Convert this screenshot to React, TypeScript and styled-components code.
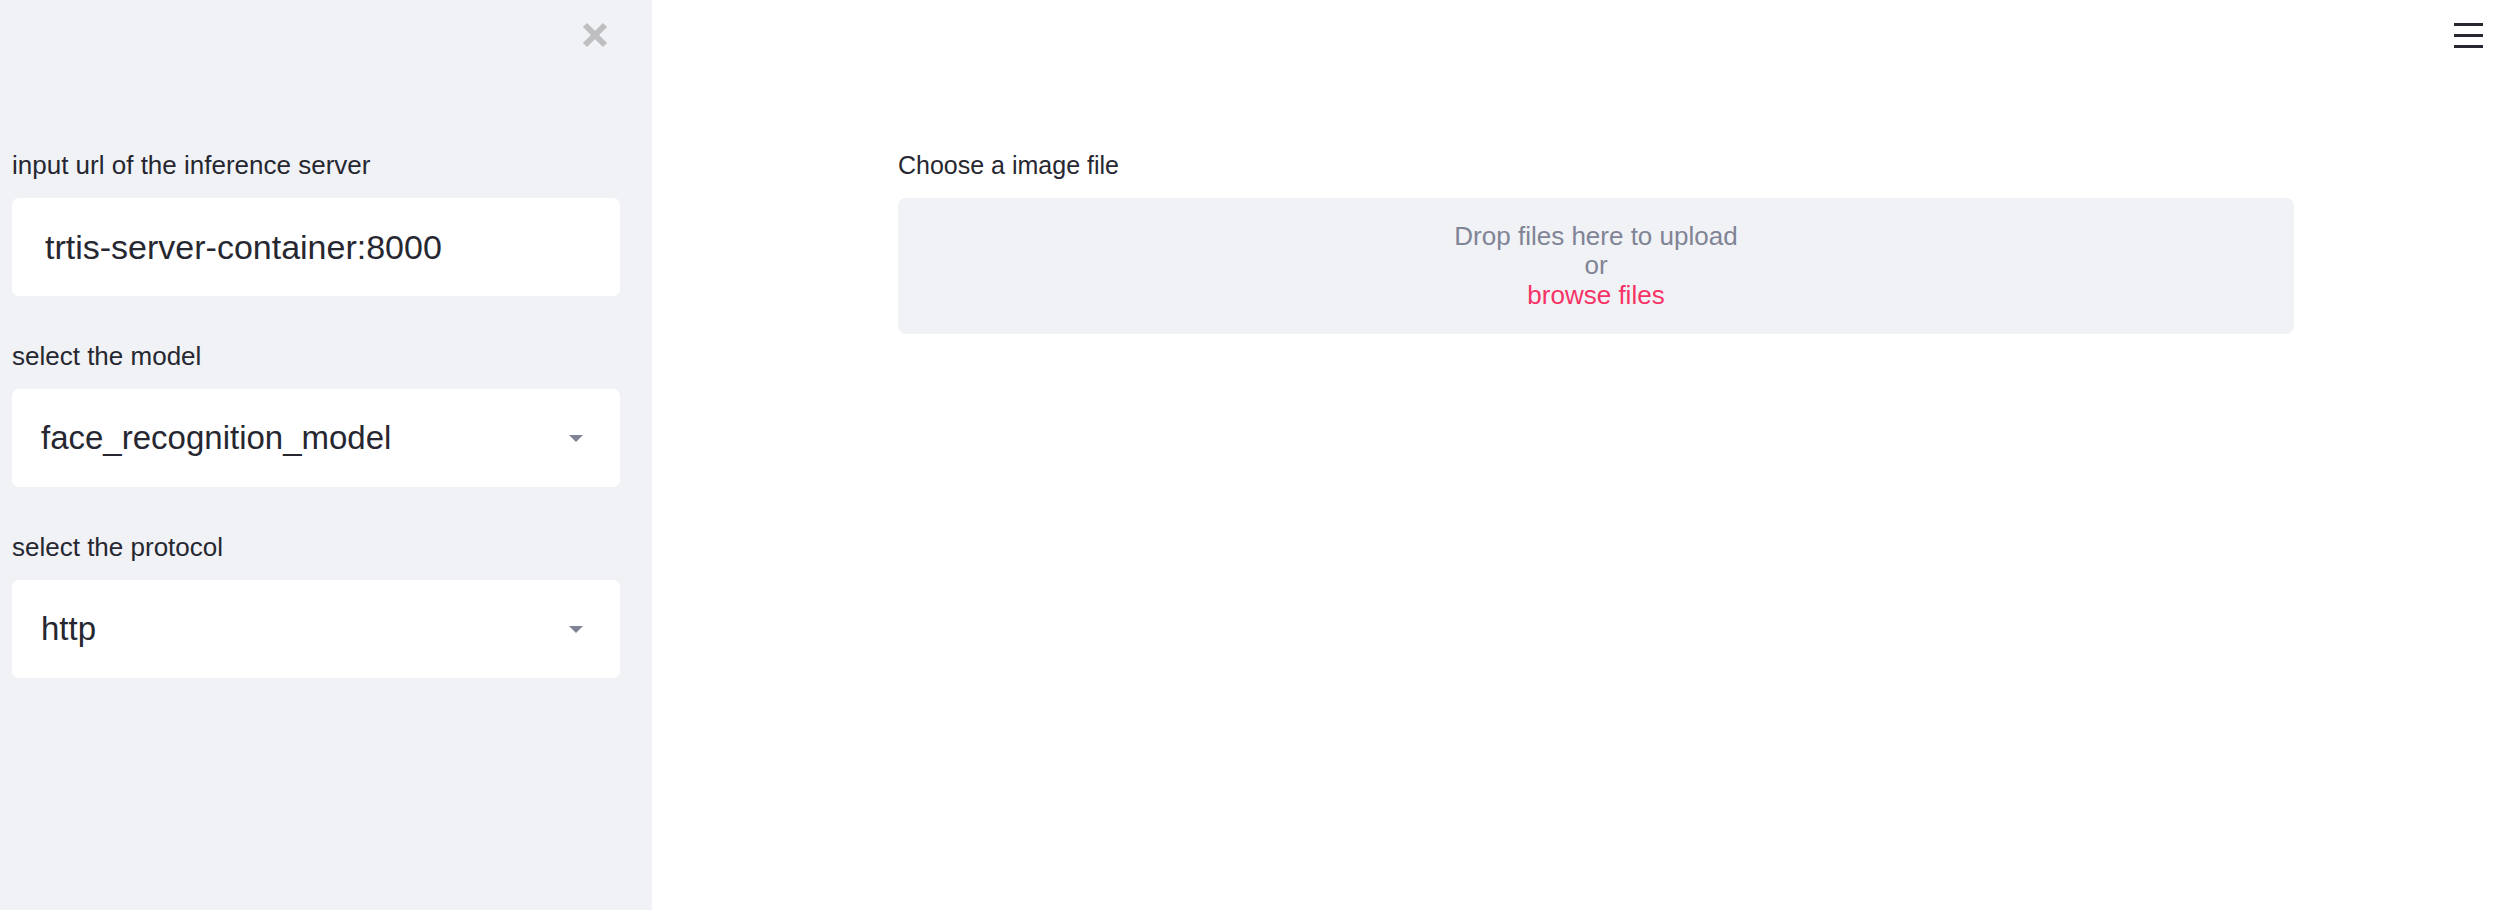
import React from "react";
import styled, { createGlobalStyle } from "styled-components";

const GlobalStyle = createGlobalStyle`
  html, body {
    margin: 0;
    padding: 0;
    background: #ffffff;
  }
  body {
    font-family: "Liberation Sans", Arial, sans-serif;
    color: #262730;
  }
  * {
    box-sizing: border-box;
  }
`;

const Page = styled.div`
  display: flex;
  width: 2520px;
  height: 910px;
  overflow: hidden;
`;

const Sidebar = styled.aside`
  flex: none;
  width: 652px;
  height: 910px;
  background: #f0f2f6;
  padding: 0 32px 0 12px;
  display: flex;
  flex-direction: column;
`;

const SidebarHeader = styled.div`
  height: 70px;
  margin-bottom: 77px;
  display: flex;
  align-items: center;
  justify-content: flex-end;
  padding-right: 11px;
`;

const IconButton = styled.button`
  border: none;
  background: transparent;
  padding: 0;
  margin: 0;
  display: flex;
  align-items: center;
  justify-content: center;
  cursor: pointer;
`;

const Widgets = styled.div`
  display: flex;
  flex-direction: column;
  gap: 42px;
`;

const Field = styled.div`
  display: flex;
  flex-direction: column;
`;

const Label = styled.label<{ $size?: number }>`
  display: block;
  font-size: ${(p) => p.$size ?? 26}px;
  line-height: 36px;
  height: 36px;
  margin-bottom: 15px;
  color: #262730;
  white-space: nowrap;
`;

const TextInput = styled.input`
  display: block;
  width: 100%;
  height: 98px;
  border: none;
  outline: none;
  border-radius: 7px;
  background: #ffffff;
  padding: 0 20px 0 33px;
  font-family: "Liberation Sans", Arial, sans-serif;
  font-size: 34px;
  color: #262730;
`;

const SelectBox = styled.div`
  height: 98px;
  border-radius: 7px;
  background: #ffffff;
  display: flex;
  align-items: center;
  justify-content: space-between;
  padding: 0 37px 0 29px;
  font-size: 33px;
  color: #262730;
`;

const SelectValue = styled.span`
  white-space: nowrap;
`;

const Main = styled.main`
  flex: 1;
  display: flex;
  flex-direction: column;
  min-width: 0;
`;

const Toolbar = styled.header`
  height: 70px;
  display: flex;
  align-items: center;
  justify-content: flex-end;
  padding-right: 37px;
`;

const Hamburger = styled.div`
  width: 29px;
  display: flex;
  flex-direction: column;
  gap: 8px;
`;

const HamburgerBar = styled.span`
  display: block;
  height: 3px;
  background: #262730;
`;

const Content = styled.section`
  padding: 77px 226px 0 246px;
  display: flex;
  flex-direction: column;
`;

const DropZone = styled.div`
  height: 136px;
  border-radius: 8px;
  background: #f0f2f6;
  display: flex;
  flex-direction: column;
  align-items: center;
  justify-content: center;
  font-size: 26px;
  line-height: 29.5px;
  color: #808495;
`;

const BrowseLink = styled.span`
  color: #f63366;
  cursor: pointer;
`;

const CloseIcon = () => (
  <svg width="28" height="28" viewBox="0 0 28 28" aria-hidden="true">
    <path
      d="M4 4 L24 24 M24 4 L4 24"
      stroke="#bfbfc2"
      strokeWidth="6"
      strokeLinecap="butt"
      fill="none"
    />
  </svg>
);

const Caret = () => (
  <svg width="14" height="7" viewBox="0 0 14 7" aria-hidden="true">
    <polygon points="0,0 14,0 7,7" fill="#808495" />
  </svg>
);

export default function App() {
  return (
    <>
      <GlobalStyle />
      <Page>
        <Sidebar>
          <SidebarHeader>
            <IconButton aria-label="Close sidebar">
              <CloseIcon />
            </IconButton>
          </SidebarHeader>
          <Widgets>
            <Field>
              <Label>input url of the inference server</Label>
              <TextInput readOnly value="trtis-server-container:8000" />
            </Field>
            <Field>
              <Label>select the model</Label>
              <SelectBox>
                <SelectValue>face_recognition_model</SelectValue>
                <Caret />
              </SelectBox>
            </Field>
            <Field>
              <Label>select the protocol</Label>
              <SelectBox>
                <SelectValue>http</SelectValue>
                <Caret />
              </SelectBox>
            </Field>
          </Widgets>
        </Sidebar>
        <Main>
          <Toolbar>
            <Hamburger aria-label="Menu">
              <HamburgerBar />
              <HamburgerBar />
              <HamburgerBar />
            </Hamburger>
          </Toolbar>
          <Content>
            <Label $size={25}>Choose a image file</Label>
            <DropZone>
              <span>Drop files here to upload</span>
              <span>or</span>
              <BrowseLink>browse files</BrowseLink>
            </DropZone>
          </Content>
        </Main>
      </Page>
    </>
  );
}
